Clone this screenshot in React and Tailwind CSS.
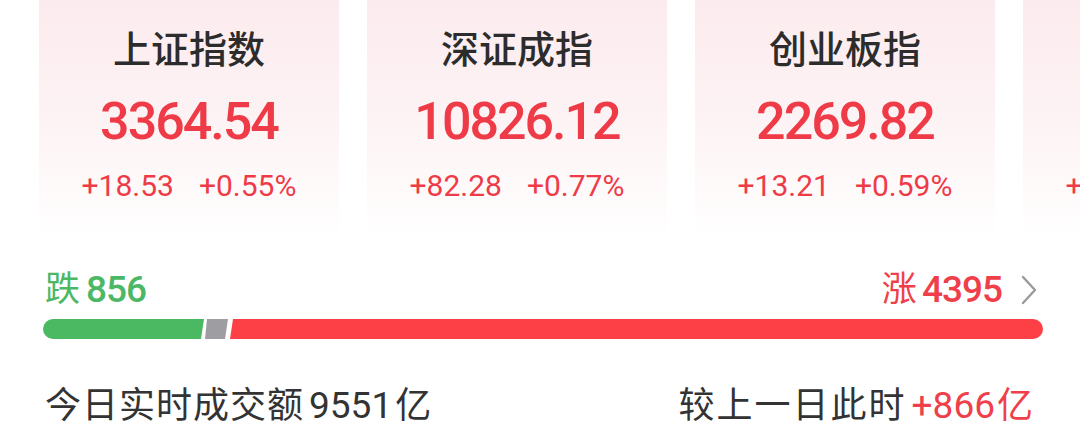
import { useState } from 'react';

const indices = [
  { name: '上证指数', price: '3364.54', change: '+18.53', pct: '+0.55%' },
  { name: '深证成指', price: '10826.12', change: '+82.28', pct: '+0.77%' },
  { name: '创业板指', price: '2269.82', change: '+13.21', pct: '+0.59%' },
  { name: '科创50', price: '1012.57', change: '+13.45', pct: '+1.35%' },
];

const font = { fontFamily: 'Roboto, "Noto Sans CJK SC", sans-serif' };

function IndexCard({ item }) {
  return (
    <div className="flex h-[240px] w-[300px] shrink-0 flex-col items-center bg-gradient-to-b from-[#fcebee] via-[#fdf3f4] to-white">
      <div className="mt-[31px] text-[38px] font-medium leading-[38px] text-[#2c2c2c]">{item.name}</div>
      <div className="mt-[27px] text-[52px] font-medium leading-[52px] tracking-[-2px] text-[#ee3b47]">{item.price}</div>
      <div className="mt-[23px] flex gap-[25px] text-[30px] leading-[30px] text-[#ee3b47]">
        <span>{item.change}</span>
        <span>{item.pct}</span>
      </div>
    </div>
  );
}

export default function App() {
  const [down] = useState(856);
  const [up] = useState(4395);

  return (
    <div className="h-[446px] w-[1080px] overflow-hidden bg-white" style={font}>
      <div className="flex gap-[28px] overflow-hidden pl-[39px]">
        {indices.map((item) => (
          <IndexCard key={item.name} item={item} />
        ))}
      </div>

      <div className="pl-[43px] pr-[37px]">
        <div className="mt-[32px] flex h-[36px] items-center justify-between">
          <div className="flex items-center pl-[2px] text-[#4cb866]">
            <span className="text-[35px] leading-[36px]">跌</span>
            <span className="ml-[6px] text-[37px] font-medium leading-[36px] tracking-[-1px]">{down}</span>
          </div>
          <div className="flex items-center text-[#ef3f4a]">
            <span className="text-[35px] leading-[36px]">涨</span>
            <span className="ml-[5px] text-[37px] font-medium leading-[36px] tracking-[-1px]">{up}</span>
            <svg className="ml-[19px] mr-[6px]" width="16" height="30" viewBox="0 0 16 30" fill="none">
              <path d="M2 2 L14 15 L2 28" stroke="#9a9a9a" strokeWidth="2.4" strokeLinecap="round" strokeLinejoin="round" />
            </svg>
          </div>
        </div>

        <div className="mt-[11px] flex h-[20px]">
          <div className="h-full w-[161px] rounded-l-full bg-[#4bb962] [clip-path:polygon(0_0,100%_0,calc(100%-3px)_100%,0_100%)]" />
          <div className="ml-[1px] h-full w-[23px] bg-[#9d9da2] [clip-path:polygon(2px_0,100%_0,calc(100%-3px)_100%,0_100%)]" />
          <div className="ml-[2px] h-full flex-1 rounded-r-full bg-[#fd4045] [clip-path:polygon(3px_0,100%_0,100%_100%,0_100%)]" />
        </div>

        <div className="mt-[49px] flex h-[36px] items-center justify-between pl-[2px] pr-[10px] text-[36px] leading-[36px] text-[#333333]">
          <div className="flex items-center">
            <span className="tracking-[1px]">今日实时成交额</span>
            <span className="ml-[5px] text-[37px]">9551</span>
            <span className="ml-[3px]">亿</span>
          </div>
          <div className="flex items-center">
            <span className="tracking-[2px]">较上一日此时</span>
            <span className="ml-[5px] text-[37px] text-[#ef3f4a]">+866</span>
            <span className="ml-[2px] text-[#ef3f4a]">亿</span>
          </div>
        </div>
      </div>
    </div>
  );
}
